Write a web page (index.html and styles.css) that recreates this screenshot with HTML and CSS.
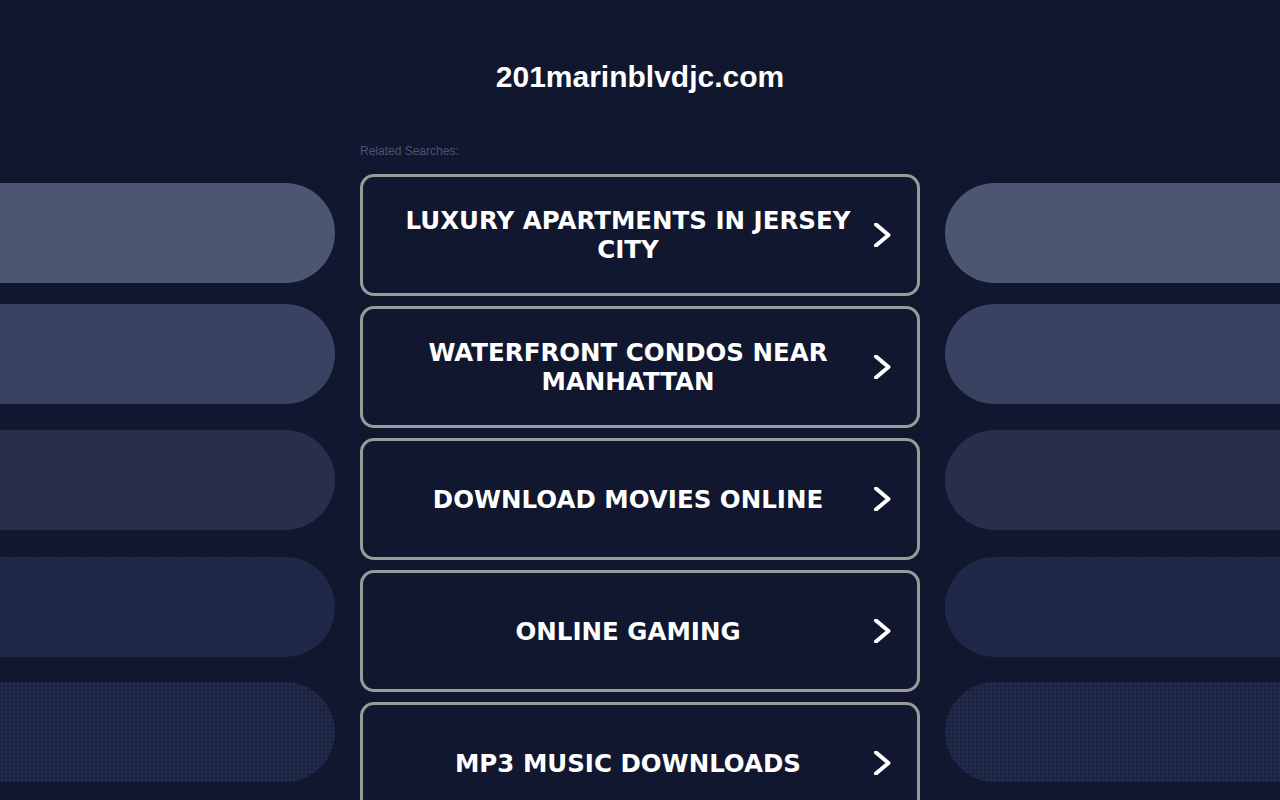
FILE: index.html
```html
<!DOCTYPE html>
<html lang="en">
<head>
<meta charset="utf-8">
<title>201marinblvdjc.com</title>
<link rel="stylesheet" href="styles.css">
</head>
<body>
<div class="page">
  <div class="side side-left">
    <div class="pill p1"></div>
    <div class="pill p2"></div>
    <div class="pill p3"></div>
    <div class="pill p4"></div>
    <div class="pill p5"></div>
  </div>
  <main class="center">
    <h1 class="domain">201marinblvdjc.com</h1>
    <div class="related">Related Searches:</div>
    <div class="links">
      <a class="link" href="#"><span class="label">LUXURY APARTMENTS IN JERSEY CITY</span><svg class="chev" viewBox="0 0 24 24" width="24" height="24"><path d="M6 1.5 L18.5 12 L6 22.5"/></svg></a>
      <a class="link" href="#"><span class="label">WATERFRONT CONDOS NEAR MANHATTAN</span><svg class="chev" viewBox="0 0 24 24" width="24" height="24"><path d="M6 1.5 L18.5 12 L6 22.5"/></svg></a>
      <a class="link" href="#"><span class="label">DOWNLOAD MOVIES ONLINE</span><svg class="chev" viewBox="0 0 24 24" width="24" height="24"><path d="M6 1.5 L18.5 12 L6 22.5"/></svg></a>
      <a class="link" href="#"><span class="label">ONLINE GAMING</span><svg class="chev" viewBox="0 0 24 24" width="24" height="24"><path d="M6 1.5 L18.5 12 L6 22.5"/></svg></a>
      <a class="link" href="#"><span class="label">MP3 MUSIC DOWNLOADS</span><svg class="chev" viewBox="0 0 24 24" width="24" height="24"><path d="M6 1.5 L18.5 12 L6 22.5"/></svg></a>
    </div>
  </main>
  <div class="side side-right">
    <div class="pill p1"></div>
    <div class="pill p2"></div>
    <div class="pill p3"></div>
    <div class="pill p4"></div>
    <div class="pill p5"></div>
  </div>
</div>
</body>
</html>
```

FILE: styles.css
```css
html, body {
  margin: 0;
  padding: 0;
  background: #11172e;
  overflow: hidden;
}
body {
  width: 1280px;
  height: 800px;
  font-family: "Liberation Sans", Arial, sans-serif;
}
.page {
  display: grid;
  grid-template-columns: 335px 560px 335px;
  column-gap: 25px;
  height: 800px;
}
.side {
  display: flex;
  flex-direction: column;
  padding-top: 183px;
}
.pill {
  height: 100px;
  flex: none;
}
.side-left .pill { border-radius: 0 50px 50px 0; }
.side-right .pill { border-radius: 50px 0 0 50px; }
.p2 { margin-top: 21px; }
.p3 { margin-top: 26px; }
.p4 { margin-top: 27px; }
.p5 { margin-top: 25px; }
.p1 { background: #4c5673; }
.p2 { background: #3a4261; }
.p3 { background: #272f4d; }
.p4 {
  background-color: #1f2746;
  background-image: radial-gradient(circle, rgba(70, 90, 140, 0.18) 0.6px, transparent 0.9px);
  background-size: 3px 3px;
}
.p5 {
  background-color: #1c2442;
  background-image: radial-gradient(circle, rgba(70, 90, 140, 0.3) 0.6px, transparent 0.9px);
  background-size: 4px 4px;
}
.center {
  display: flex;
  flex-direction: column;
}
.domain {
  margin: 0;
  padding-top: 59px;
  font-size: 30px;
  line-height: 36px;
  font-weight: bold;
  color: #ffffff;
  text-align: center;
}
.related {
  margin-top: 49px;
  font-size: 12px;
  line-height: 14px;
  color: #4a5473;
}
.links {
  margin-top: 16px;
  display: flex;
  flex-direction: column;
  gap: 10px;
}
.link {
  box-sizing: border-box;
  height: 122px;
  border: 3px solid #9a9a9a;
  border-radius: 14px;
  display: flex;
  align-items: center;
  padding: 0 23px 0 30px;
  text-decoration: none;
  color: #ffffff;
}
.label {
  flex: 1;
  text-align: center;
  font-family: "DejaVu Sans", Verdana, sans-serif;
  font-weight: bold;
  font-size: 24.5px;
  line-height: 29px;
}
.chev {
  flex: none;
  margin-left: 7px;
  fill: none;
  stroke: #ffffff;
  stroke-width: 4;
  stroke-linecap: round;
  stroke-linejoin: round;
}
```
